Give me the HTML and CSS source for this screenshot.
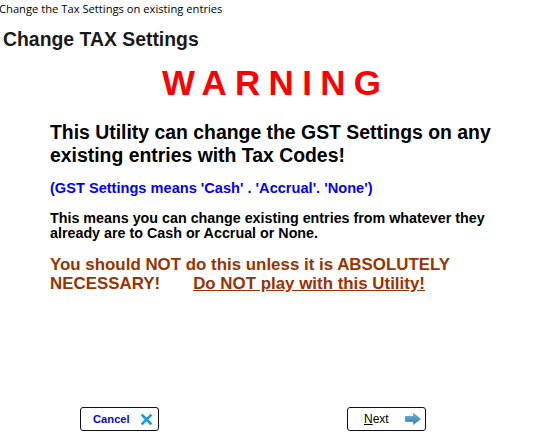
FILE: index.html
```html
<!DOCTYPE html>
<html>
<head>
<meta charset="utf-8">
<link rel="stylesheet" href="styles.css">
</head>
<body>
<div class="window">
  <div class="titlebar">Change the Tax Settings on existing entries</div>
  <h1 class="page-title">Change TAX Settings</h1>
  <div class="warning">WARNING</div>
  <div class="content">
    <p class="lead">This Utility can change the GST Settings on any existing entries with Tax Codes!</p>
    <p class="note">(GST Settings means 'Cash' . 'Accrual'. 'None')</p>
    <p class="info">This means you can change existing entries from whatever they already are to Cash or Accrual or None.</p>
    <div class="caution">
      <div class="caution-line">You should NOT do this unless it is ABSOLUTELY</div>
      <div class="caution-line caution-row"><span>NECESSARY!</span><span class="caution-link">Do NOT play with this Utility!</span></div>
    </div>
  </div>
  <div class="buttons">
    <button class="btn btn-cancel"><span class="btn-label">Cancel</span>
      <svg class="icon-x" width="11" height="11" viewBox="0 0 11 11"><path d="M1.5 1.5 L9.5 9.5 M9.5 1.5 L1.5 9.5" stroke="#1f9ad8" stroke-width="2.6" stroke-linecap="square" fill="none"/></svg>
    </button>
    <button class="btn btn-next"><span class="btn-label"><u>N</u>ext</span>
      <svg class="icon-arrow" width="16" height="12" viewBox="0 0 16 12">
        <defs><linearGradient id="ag" x1="0" y1="0" x2="0" y2="1"><stop offset="0" stop-color="#6fb8e0"/><stop offset="1" stop-color="#2f78b0"/></linearGradient></defs>
        <path d="M0.5 3.5 H8.5 V0.5 L15.5 6 L8.5 11.5 V8.5 H0.5 Z" fill="url(#ag)" stroke="#3a7fb0" stroke-width="0.6"/>
      </svg>
    </button>
  </div>
</div>
</body>
</html>
```
FILE: styles.css
```css
html, body {
  margin: 0;
  padding: 0;
  background: #ffffff;
}
.window {
  width: 560px;
  height: 440px;
  font-family: "Liberation Sans", Arial, sans-serif;
  color: #000;
}
.titlebar {
  font-family: "Open Sans", "Noto Sans", sans-serif;
  font-size: 11.2px;
  line-height: 17px;
  height: 17px;
  margin-left: -1px;
  color: #000;
}
.page-title {
  margin: 11px 0 0 3px;
  font-size: 19.4px;
  line-height: 22px;
  font-weight: bold;
  color: #1a1a1a;
}
.warning {
  margin: 13px 0 0 162px;
  font-size: 35px;
  line-height: 40px;
  font-weight: bold;
  color: #ff0000;
  letter-spacing: 8.3px;
}
.content {
  padding-left: 50px;
  width: 450px;
}
.content p { margin: 0; font-weight: bold; }
.lead {
  margin-top: 18px !important;
  font-size: 19.4px;
  line-height: 23px;
}
.note {
  margin-top: 13px !important;
  font-size: 14.6px;
  line-height: 17px;
  color: #0000ff;
}
.info {
  margin-top: 14px !important;
  font-size: 14.3px;
  line-height: 15px;
}
.caution {
  margin-top: 14px;
  font-size: 16.9px;
  line-height: 19px;
  font-weight: bold;
  color: #993300;
}
.caution-row {
  display: flex;
  gap: 33px;
}
.caution-link {
  text-decoration: underline;
}
.buttons {
  display: flex;
  margin: 114px 0 0 80px;
  gap: 188px;
}
.btn {
  box-sizing: border-box;
  width: 79px;
  height: 24px;
  border: 1px solid #101020;
  border-radius: 3px;
  background: #fff;
  padding: 0;
  display: flex;
  align-items: center;
  font-family: "Liberation Sans", Arial, sans-serif;
}
.btn-cancel { padding-left: 12px; }
.btn-cancel .btn-label {
  font-size: 11.2px;
  font-weight: bold;
  color: #0a0ac8;
  width: 48px;
  text-align: left;
}
.icon-x { display: block; }
.btn-next { padding-left: 16px; }
.btn-next .btn-label {
  font-size: 12px;
  color: #000;
  width: 41px;
  text-align: left;
}
.icon-arrow { display: block; }
```
